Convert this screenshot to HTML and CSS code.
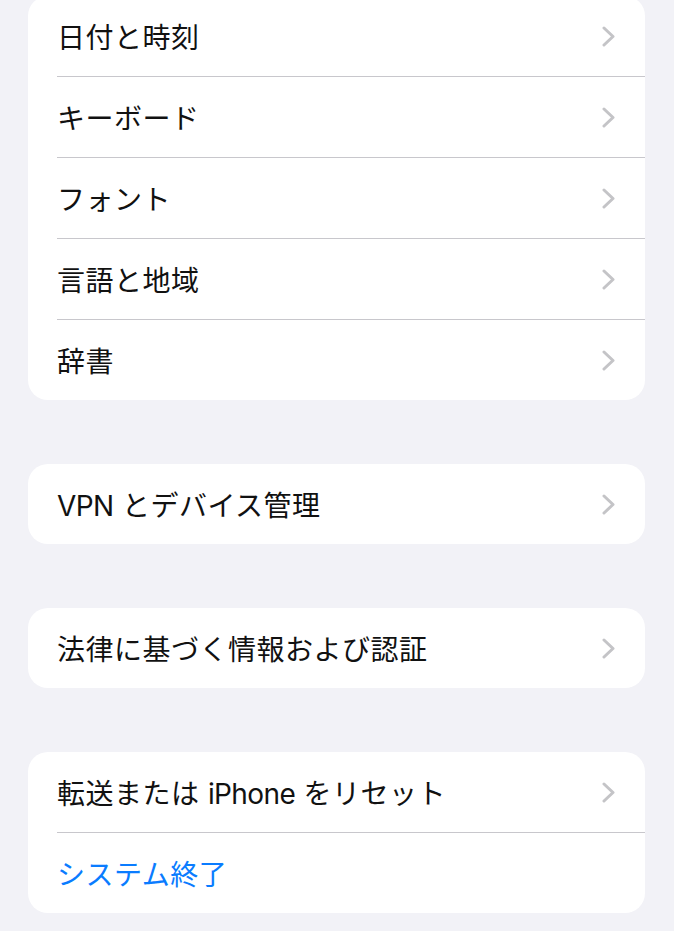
FILE: index.html
```html
<!DOCTYPE html>
<html lang="ja">
<head>
    <meta charset="UTF-8">
    <meta name="viewport" content="width=device-width, initial-scale=1.0">
    <title>一般</title>
    <link rel="stylesheet" href="styles.css">
</head>
<body>
    <main class="settings">
        <div class="group group-first">
            <div class="row"><span class="label">日付と時刻</span><svg class="chevron" viewBox="0 0 13 21"><polyline points="2,2 11,10.5 2,19"/></svg></div>
            <div class="row"><span class="label">キーボード</span><svg class="chevron" viewBox="0 0 13 21"><polyline points="2,2 11,10.5 2,19"/></svg></div>
            <div class="row"><span class="label">フォント</span><svg class="chevron" viewBox="0 0 13 21"><polyline points="2,2 11,10.5 2,19"/></svg></div>
            <div class="row"><span class="label">言語と地域</span><svg class="chevron" viewBox="0 0 13 21"><polyline points="2,2 11,10.5 2,19"/></svg></div>
            <div class="row"><span class="label">辞書</span><svg class="chevron" viewBox="0 0 13 21"><polyline points="2,2 11,10.5 2,19"/></svg></div>
        </div>

        <div class="group">
            <div class="row"><span class="label"><span class="latin">VPN</span> とデバイス管理</span><svg class="chevron" viewBox="0 0 13 21"><polyline points="2,2 11,10.5 2,19"/></svg></div>
        </div>

        <div class="group">
            <div class="row"><span class="label">法律に基づく情報および認証</span><svg class="chevron" viewBox="0 0 13 21"><polyline points="2,2 11,10.5 2,19"/></svg></div>
        </div>

        <div class="group">
            <div class="row"><span class="label">転送または <span class="latin">iPhone</span> をリセット</span><svg class="chevron" viewBox="0 0 13 21"><polyline points="2,2 11,10.5 2,19"/></svg></div>
            <div class="row"><span class="label label-action">システム終了</span></div>
        </div>
    </main>
</body>
</html>
```

FILE: styles.css
```css
body {
    margin: 0;
    padding: 0;
    background-color: #f2f2f7;
    font-family: Inter, "Noto Sans CJK JP", sans-serif;
    color: #111;
}
.settings {
    display: flex;
    flex-direction: column;
    gap: 64px;
    padding: 0 29px 40px 28px;
}
.group {
    background-color: #fff;
    border-radius: 20px;
    overflow: hidden;
}
.group-first {
    margin-top: -4px;
}
.row {
    display: flex;
    align-items: center;
    height: 80px;
    margin-left: 29px;
    padding-right: 30px;
}
.row + .row {
    border-top: 1px solid #c8c7cc;
}
.label {
    flex: 1;
    font-size: 28px;
    line-height: 1;
    letter-spacing: 0.5px;
    padding-top: 3px;
}
.latin {
    letter-spacing: -0.6px;
}
.label-action {
    color: #0a7cff;
}
.chevron {
    width: 13px;
    height: 21px;
    fill: none;
    stroke: #c4c4c7;
    stroke-width: 3;
    stroke-linecap: round;
    stroke-linejoin: round;
}
```
